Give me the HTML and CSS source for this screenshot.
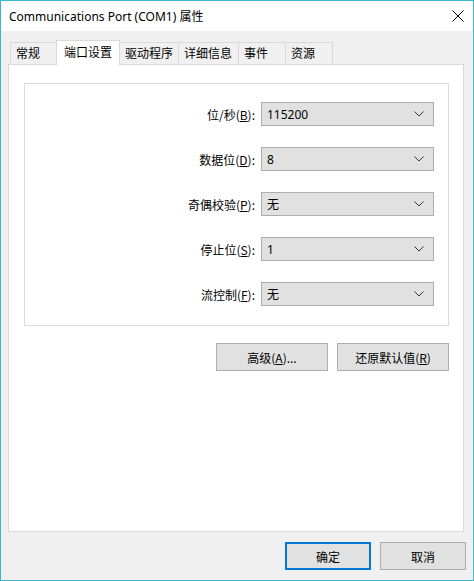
FILE: index.html
```html
<!DOCTYPE html>
<html lang="zh-CN">
<head>
<meta charset="utf-8">
<title>Communications Port (COM1) 属性</title>
<link rel="stylesheet" href="styles.css">
</head>
<body>
<div class="window">
  <div class="titlebar">
    <span class="title">Communications Port (COM1) 属性</span>
    <svg class="close" width="12" height="12" viewBox="0 0 12 12"><path d="M0.5 0.5 L11.5 11.5 M11.5 0.5 L0.5 11.5" stroke="#000" stroke-width="1" fill="none"/></svg>
  </div>
  <div class="client">
    <div class="tabs">
      <div class="tab t1">常规</div>
      <div class="tab t2 active">端口设置</div>
      <div class="tab t3">驱动程序</div>
      <div class="tab t4">详细信息</div>
      <div class="tab t5">事件</div>
      <div class="tab t6">资源</div>
    </div>
    <div class="panel">
      <div class="group">
        <div class="row"><span class="label">位/秒(<u>B</u>):</span><div class="combo"><span>115200</span><svg width="10" height="6" viewBox="0 0 10 6"><path d="M0.5 0.5 L5 5 L9.5 0.5" stroke="#333" fill="none"/></svg></div></div>
        <div class="row"><span class="label">数据位(<u>D</u>):</span><div class="combo"><span>8</span><svg width="10" height="6" viewBox="0 0 10 6"><path d="M0.5 0.5 L5 5 L9.5 0.5" stroke="#333" fill="none"/></svg></div></div>
        <div class="row"><span class="label">奇偶校验(<u>P</u>):</span><div class="combo"><span>无</span><svg width="10" height="6" viewBox="0 0 10 6"><path d="M0.5 0.5 L5 5 L9.5 0.5" stroke="#333" fill="none"/></svg></div></div>
        <div class="row"><span class="label">停止位(<u>S</u>):</span><div class="combo"><span>1</span><svg width="10" height="6" viewBox="0 0 10 6"><path d="M0.5 0.5 L5 5 L9.5 0.5" stroke="#333" fill="none"/></svg></div></div>
        <div class="row"><span class="label">流控制(<u>F</u>):</span><div class="combo"><span>无</span><svg width="10" height="6" viewBox="0 0 10 6"><path d="M0.5 0.5 L5 5 L9.5 0.5" stroke="#333" fill="none"/></svg></div></div>
      </div>
      <div class="actions">
        <div class="btn wide">高级(<u>A</u>)...</div>
        <div class="btn wide">还原默认值(<u>R</u>)</div>
      </div>
    </div>
    <div class="footer">
      <div class="btn small default">确定</div>
      <div class="btn small">取消</div>
    </div>
  </div>
</div>
</body>
</html>
```
FILE: styles.css
```css
* { box-sizing: border-box; }
html, body { margin: 0; padding: 0; }
body {
  font-family: "Noto Sans", "Noto Sans CJK SC", sans-serif;
  font-size: 12px;
  color: #000;
  background: #fff;
}
.window {
  width: 474px;
  height: 581px;
  border: 1px solid #3bb7c8;
  display: flex;
  flex-direction: column;
  overflow: hidden;
}
.titlebar {
  height: 30px;
  background: #fff;
  display: flex;
  align-items: center;
  padding-left: 8px;
  padding-right: 9px;
  flex-shrink: 0;
}
.title {
  flex: 1;
  font-size: 12px;
  line-height: 14px;
  padding-top: 1px;
}
.close { display: block; }
.client {
  flex: 1;
  background: #f0f0f0;
  padding: 9px 9px 0 7px;
  display: flex;
  flex-direction: column;
}
.tabs {
  display: flex;
  height: 24px;
  padding-left: 2px;
  align-items: flex-end;
  position: relative;
  z-index: 2;
}
.tab {
  height: 22px;
  border: 1px solid #d9d9d9;
  border-bottom: none;
  margin-right: -1px;
  background: #f0f0f0;
  text-align: left;
  padding-left: 5px;
  line-height: 20px;
  font-family: "Noto Sans CJK SC", sans-serif;
  font-size: 12px;
}
.t1 { width: 47px; }
.t2 { width: 64px; }
.t3 { width: 60px; }
.t4 { width: 61px; }
.t5 { width: 48px; }
.t6 { width: 48px; }
.tab.active {
  background: #fff;
  height: 25px;
  margin-bottom: -1px;
  line-height: 22px;
  padding-left: 7px;
  position: relative;
  z-index: 3;
}
.panel {
  width: 456px;
  height: 468px;
  background: #fff;
  border: 1px solid #d9d9d9;
  padding: 18px 14px 0 15px;
  position: relative;
  z-index: 1;
}
.group {
  width: 425px;
  height: 243px;
  border: 1px solid #dcdcdc;
  padding: 18px 14px 0 0;
  display: flex;
  flex-direction: column;
  gap: 21px;
}
.row {
  display: flex;
  justify-content: flex-end;
  align-items: center;
  height: 24px;
}
.label {
  font-family: "Noto Sans CJK SC", sans-serif;
  margin-right: 6px;
}
.combo {
  width: 173px;
  height: 24px;
  background: #e1e1e1;
  border: 1px solid #adadad;
  display: flex;
  align-items: center;
  justify-content: space-between;
  padding: 0 9px 0 5px;
  font-family: "Noto Sans", "Noto Sans CJK SC", sans-serif;
}
.combo svg { display: block; }
.actions {
  display: flex;
  justify-content: flex-end;
  gap: 9px;
  margin-top: 17px;
  width: 425px;
}
.btn {
  height: 28px;
  background: #e1e1e1;
  border: 1px solid #adadad;
  display: flex;
  align-items: center;
  justify-content: center;
  font-family: "Noto Sans CJK SC", sans-serif;
}
.btn.wide { width: 112px; }
.btn.small { width: 86px; }
.btn.default { border: 2px solid #0078d7; }
.footer {
  display: flex;
  justify-content: flex-end;
  gap: 9px;
  margin-top: 10px;
  margin-right: -2px;
}
```
